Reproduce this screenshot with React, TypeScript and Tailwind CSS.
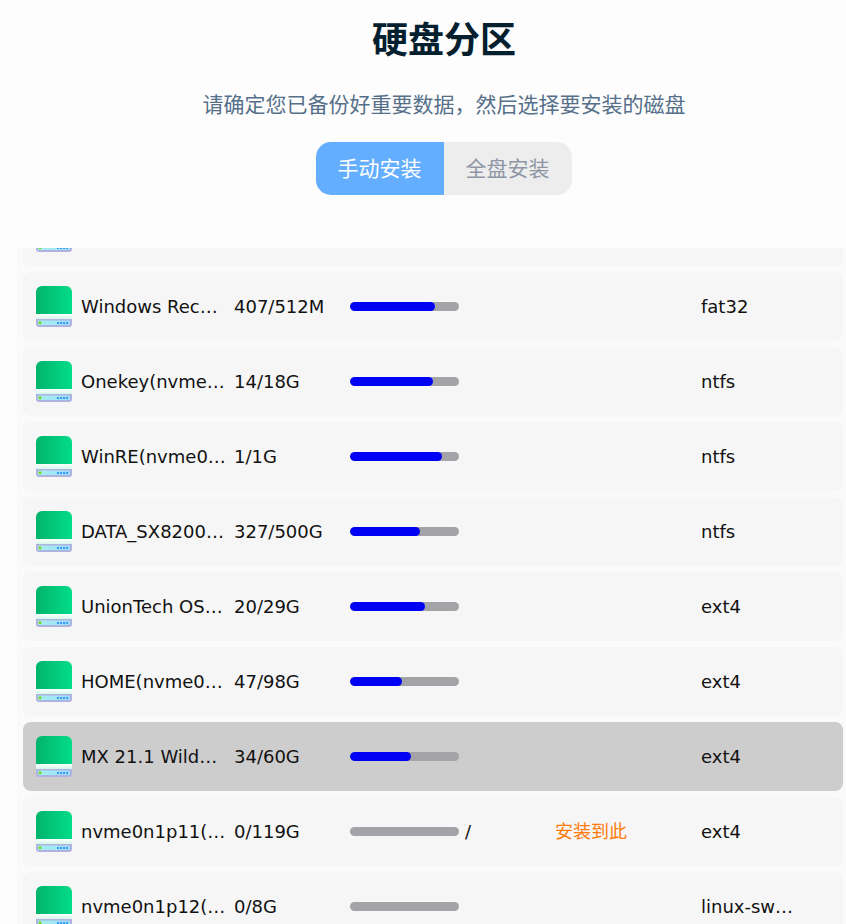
const rows = [
  { name: "Windows Recovery", size: "407/512M", pct: 78, fs: "fat32" },
  { name: "Onekey(nvme0n1p3)", size: "14/18G", pct: 76, fs: "ntfs" },
  { name: "WinRE(nvme0n1p4)", size: "1/1G", pct: 84.5, fs: "ntfs" },
  { name: "DATA_SX8200(nvme0n1p5)", size: "327/500G", pct: 64.4, fs: "ntfs" },
  { name: "UnionTech OS(nvme0n1p6)", size: "20/29G", pct: 69, fs: "ext4" },
  { name: "HOME(nvme0n1p7)", size: "47/98G", pct: 48, fs: "ext4" },
  { name: "MX 21.1 Wildflower", size: "34/60G", pct: 56, fs: "ext4", selected: true },
  { name: "nvme0n1p11(unknown)", size: "0/119G", pct: 0, fs: "ext4", mount: "/", action: "安装到此" },
  { name: "nvme0n1p12(unknown)", size: "0/8G", pct: 0, fs: "linux-swap" },
];

function Disk() {
  return (
    <svg width="36" height="41" viewBox="0 0 36 41" className="shrink-0">
      <defs>
        <linearGradient id="g" x1="0" x2="1" y1="0" y2="0">
          <stop offset="0" stopColor="#02b46c" />
          <stop offset="1" stopColor="#02dc88" />
        </linearGradient>
        <linearGradient id="b" x1="0" x2="1" y1="0" y2="0">
          <stop offset="0" stopColor="#a4f0ee" />
          <stop offset="1" stopColor="#9fdcfb" />
        </linearGradient>
        <linearGradient id="w" x1="0" x2="0" y1="0" y2="1">
          <stop offset="0" stopColor="#fbfffd" />
          <stop offset="1" stopColor="#d6f7ea" />
        </linearGradient>
      </defs>
      <path d="M0 31h36v7a3 3 0 0 1-3 3H3a3 3 0 0 1-3-3z" fill="#afb3e0" />
      <rect x="2" y="34.5" width="32" height="4.5" rx="1" fill="url(#b)" />
      <path d="M0 28V6a6 6 0 0 1 6-6h24a6 6 0 0 1 6 6v22z" fill="url(#g)" />
      <path d="M0 28h36v5H0z" fill="url(#w)" />
      <circle cx="4" cy="36.8" r="1.5" fill="#7ed321" />
      <g fill="#3a9cf5">
        <rect x="21" y="36" width="2" height="2" />
        <rect x="24" y="36" width="2" height="2" />
        <rect x="27" y="36" width="2" height="2" />
        <rect x="30" y="36" width="2" height="2" />
      </g>
    </svg>
  );
}

function Row({ r }: { r: (typeof rows)[number] }) {
  return (
    <div
      className={`flex h-[69px] items-center rounded-lg pl-[13px] text-[18px] text-[#111111] ${
        r.selected ? "bg-[#cdcdcd]" : "bg-[#f6f6f6]"
      }`}
    >
      <div className="flex w-[45px] shrink-0">
        <Disk />
      </div>
      <div className="w-[153px] shrink-0 pr-[6px]">
        <div className="truncate">{r.name}</div>
      </div>
      <div className="w-[115.5px] shrink-0">{r.size}</div>
      <div className="h-[9px] w-[109.5px] shrink-0 overflow-hidden rounded-full bg-[#a3a3a8]">
        <div className="h-full rounded-full bg-[#0000f5]" style={{ width: `${r.pct}%` }} />
      </div>
      <div className="w-[96px] shrink-0 pl-[6px]">{r.mount}</div>
      <div className="w-[146px] shrink-0 text-[#ff7b0a]">{r.action}</div>
      <div className="w-[93px] shrink-0">
        <div className="truncate">{r.fs}</div>
      </div>
    </div>
  );
}

export default function App() {
  return (
    <div
      className="flex h-[924px] w-[846px] flex-col overflow-hidden bg-[#fdfdfd]"
      style={{ fontFamily: '"DejaVu Sans","Noto Sans CJK SC",sans-serif' }}
    >
      <header className="flex h-[248px] shrink-0 flex-col items-center pl-[42px]">
        <h1 className="mt-[16px] text-[36px] leading-[50px] font-bold whitespace-nowrap text-[#04202f]">硬盘分区</h1>
        <p className="mt-[24px] text-[21px] leading-[30px] whitespace-nowrap text-[#56708a]">
          请确定您已备份好重要数据，然后选择要安装的磁盘
        </p>
        <div className="mt-[22px] flex h-[53px] overflow-hidden rounded-[15px] text-[21px] whitespace-nowrap">
          <div className="flex w-[128px] items-center justify-center bg-[#63aeff] pt-[3px] pr-[1px] text-white">手动安装</div>
          <div className="flex w-[128px] items-center justify-center bg-[#ededed] pt-[3px] pr-[1px] text-[#8f97a6]">全盘安装</div>
        </div>
      </header>
      <div className="ml-[17px] min-h-0 flex-1 overflow-hidden bg-[#fafafa] pl-[6px] pr-[3px]">
        <div className="-mt-[51px] flex flex-col gap-[6px]">
          <div className="h-[69px] rounded-lg bg-[#f6f6f6] pl-[13px] pt-[14px]">
            <Disk />
          </div>
          {rows.map((r) => (
            <Row key={r.name} r={r} />
          ))}
        </div>
      </div>
    </div>
  );
}
